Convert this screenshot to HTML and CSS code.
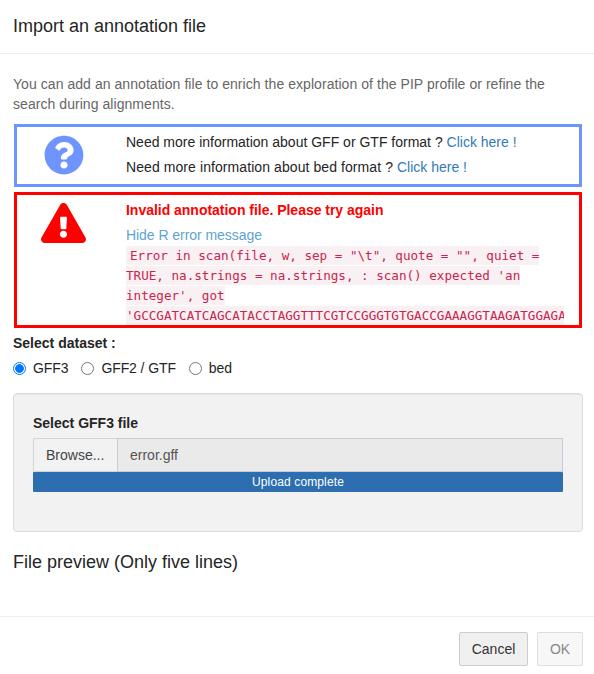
FILE: index.html
```html
<!DOCTYPE html>
<html lang="en">
<head>
<meta charset="utf-8">
<title>Import an annotation file</title>
<link rel="stylesheet" href="styles.css">
</head>
<body>
<header class="modal-header"><h4 class="title">Import an annotation file</h4></header>
<main class="modal-body">
  <p class="intro">You can add an annotation file to enrich the exploration of the PIP profile or refine the<br>search during alignments.</p>
  <section class="notice info">
    <div class="icon">
      <svg width="40" height="40" viewBox="0 0 512 512" fill="currentColor"><path d="M504 256c0 136.997-111.043 248-248 248S8 392.997 8 256C8 119.083 119.043 8 256 8s248 111.083 248 248zM262.655 90c-54.497 0-89.255 22.957-116.549 63.758-3.536 5.286-2.353 12.415 2.715 16.258l34.699 26.31c5.205 3.947 12.621 3.008 16.665-2.122 17.864-22.658 30.113-35.797 57.303-35.797 20.429 0 45.698 13.148 45.698 32.958 0 14.976-12.363 22.667-32.534 33.976C247.128 238.528 216 254.941 216 296v4c0 6.627 5.373 12 12 12h56c6.627 0 12-5.373 12-12v-1.333c0-28.462 83.186-29.647 83.186-106.667 0-58.002-60.165-102-116.531-102zM256 338c-25.365 0-46 20.635-46 46 0 25.364 20.635 46 46 46s46-20.636 46-46c0-25.365-20.635-46-46-46z"/></svg>
    </div>
    <div class="message">
      <p>Need more information about GFF or GTF format ? <a href="#">Click here !</a></p>
      <p class="bed-help">Need more information about bed format ? <a href="#">Click here !</a></p>
    </div>
  </section>
  <section class="notice error">
    <div class="icon">
      <svg width="45" height="40" viewBox="0 0 576 512" fill="currentColor"><path d="M569.517 440.013C587.975 472.007 564.806 512 527.94 512H48.054c-36.937 0-59.999-40.055-41.577-71.987L246.423 23.985c18.467-32.009 64.72-31.951 83.154 0l239.94 416.028zM288 354c-25.405 0-46 20.595-46 46s20.595 46 46 46 46-20.595 46-46-20.595-46-46-46zm-43.673-165.346l7.418 136c.347 6.364 5.609 11.346 11.982 11.346h48.546c6.373 0 11.635-4.982 11.982-11.346l7.418-136c.375-6.874-5.098-12.654-11.982-12.654h-63.383c-6.884 0-12.356 5.78-11.981 12.654z"/></svg>
    </div>
    <div class="message">
      <p><strong>Invalid annotation file. Please try again</strong></p>
      <a class="toggle" href="#">Hide R error message</a>
      <div class="trace"><code>Error in scan(file, w, sep = "\t", quote = "", quiet =<br>TRUE, na.strings = na.strings, : scan() expected 'an<br>integer', got<br>'GCCGATCATCAGCATACCTAGGTTTCGTCCGGGTGTGACCGAAAGGTAAGATGGAGA</code></div>
    </div>
  </section>
  <div class="label">Select dataset :</div>
  <div class="radios">
    <label><input type="radio" name="dataset" checked><span>GFF3</span></label>
    <label><input type="radio" name="dataset"><span>GFF2 / GTF</span></label>
    <label><input type="radio" name="dataset"><span>bed</span></label>
  </div>
  <section class="well">
    <div class="label">Select GFF3 file</div>
    <div class="file-input">
      <span class="browse">Browse...</span>
      <span class="filename">error.gff</span>
    </div>
    <div class="progress">Upload complete</div>
  </section>
  <h4 class="title preview">File preview (Only five lines)</h4>
</main>
<footer class="modal-footer">
  <button class="btn">Cancel</button>
  <button class="btn" disabled>OK</button>
</footer>
</body>
</html>
```
FILE: styles.css
```css
* { box-sizing: border-box; }

body {
  margin: 0;
  height: 674px;
  display: flex;
  flex-direction: column;
  overflow: hidden;
  background: #fff;
  color: #252525;
  font: 14px/20px "Liberation Sans", Arial, sans-serif;
}

p, h4 { margin: 0; }
a { color: #337ab7; text-decoration: none; }

.title { font-size: 18px; font-weight: 400; line-height: 20px; }

.modal-header {
  height: 54px;
  padding: 16px 13px;
  border-bottom: 1px solid #eee;
}

.modal-body { flex: 1; padding: 20px 11px 0 13px; }

.intro { margin-bottom: 10px; color: #666; white-space: nowrap; letter-spacing: .055px; }

.notice {
  display: flex;
  margin: 0 1px 5px;
  border: 3px solid;
}
.notice .icon { width: 94px; flex: none; display: flex; justify-content: center; }
.notice svg { display: block; }
.message { flex: 1; min-width: 0; margin-left: 15px; padding-top: 5px; }
.message p { margin-bottom: 5px; }

.info { height: 63px; border-color: #7094ff; }
.info .icon { color: #7094ff; padding-top: 8px; }
.bed-help { letter-spacing: .08px; }
.bed-help a { letter-spacing: 0; }

.error { height: 136px; border-color: #f00; color: #f00; }
.error .icon { padding: 8px 1px 0 0; }
.error strong { letter-spacing: -.02px; }
.toggle { display: block; color: #5fa4cd; letter-spacing: -.05px; }
.trace {
  width: 438px;
  height: 80px;
  padding-top: 1px;
  overflow: hidden;
  white-space: nowrap;
  font: 12.6px/20px "DejaVu Sans Mono", monospace;
}
code {
  padding: 2px 4px;
  border-radius: 4px;
  background: #f9f0f3;
  color: #c7254e;
  font: inherit;
}

.label { font-weight: 700; margin-bottom: 5px; }

.radios { display: flex; gap: 13px; letter-spacing: -.1px; }
.radios label { display: flex; align-items: center; gap: 7px; }
.radios input {
  appearance: none;
  width: 13px;
  height: 13px;
  margin: 0;
  border: 1px solid #767676;
  border-radius: 50%;
  background: #fff;
}
.radios input:checked {
  border-color: #0075ff;
  background: radial-gradient(circle, #0075ff 0 4px, #fff 4.6px);
}

.well {
  height: 139px;
  margin-top: 15px;
  padding: 19px;
  border: 1px solid #dcdcdc;
  border-radius: 4px;
  background: #f2f2f2;
  box-shadow: inset 0 1px 1px rgba(0, 0, 0, .05);
}
.file-input { display: flex; height: 34px; line-height: 32px; }
.browse {
  width: 84px;
  padding-left: 12px;
  border: 1px solid #d5d5d5;
  border-right: 0;
  border-radius: 2px 0 0 2px;
  color: #444;
}
.filename {
  flex: 1;
  padding-left: 12px;
  border: 1px solid #c8ccd8;
  background: #eaeaea;
  color: #555;
}
.progress {
  height: 20px;
  border-radius: 1px;
  background: #2c6eaf;
  color: #fff;
  font-size: 12px;
  letter-spacing: .13px;
  text-align: center;
}
.preview { margin-top: 20px; }

.modal-footer {
  display: flex;
  justify-content: flex-end;
  gap: 9px;
  height: 58px;
  padding: 15px 11px 0 0;
  border-top: 1px solid #eee;
}
.btn {
  height: 34px;
  padding: 0 11px;
  border: 1px solid #ccc;
  border-radius: 2px;
  background: #f0f0f0;
  color: #333;
  font: inherit;
}
.btn:first-child { width: 69px; }
.btn:last-child { width: 46px; }
.btn:disabled { border-color: #ddd; background: #f7f7f7; color: #888; }
```
